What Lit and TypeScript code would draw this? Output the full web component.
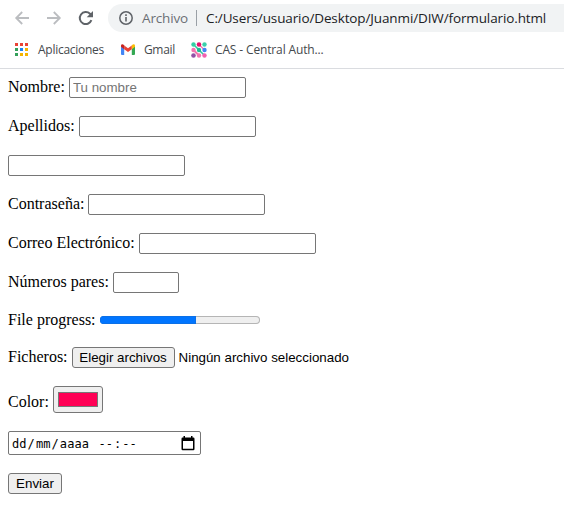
import { LitElement, html, css, svg } from "lit";
import { customElement } from "lit/decorators.js";

const APP_COLORS = ["#ea4335", "#ea4335", "#ea4335", "#34a05a", "#1a84f5", "#f5b400", "#34a05a", "#f5b400", "#f5b400"];

@customElement("browser-bar")
class BrowserBar extends LitElement {
  static styles = css`
    :host { display: block; height: 69px; border-bottom: 1px solid #dadce0; background: #fff; font-family: "Open Sans", "Noto Sans", sans-serif; white-space: nowrap; }
    svg { display: block; flex: none; }
    .nav { display: flex; align-items: center; height: 28px; padding: 4px 0 0 14px; }
    .nav > svg { width: 16px; height: 16px; margin-right: 16px; }
    .nav > svg.reload { margin-right: 14px; }
    .address { flex: 1; height: 28px; border-radius: 14px 0 0 14px; background: #f1f3f4; display: flex; align-items: center; padding-left: 11px; font-size: 13.5px; line-height: 28px; }
    .scheme { color: #6b6f74; width: 46px; margin-left: 9px; letter-spacing: -0.15px; }
    .rule { width: 1px; height: 16px; margin: 0 9px 0 8px; background: #9aa0a6; }
    .url { color: #202124; letter-spacing: -0.12px; }
    .marks { display: flex; align-items: center; height: 35px; padding-left: 15px; font-size: 12px; color: #45494d; }
    .apps { width: 66px; margin: 0 17px 0 10px; letter-spacing: -0.27px; }
    .gmail { width: 30px; margin: 0 17px 0 9px; letter-spacing: -0.35px; }
    .cas { margin-left: 8px; letter-spacing: -0.14px; }
  `;
  render() {
    return html`
      <div class="nav">
        <svg viewBox="0 0 16 16" fill="none" stroke="#bbbdc0" stroke-width="1.8"><path d="M15 8H2.5M8.2 2L2.2 8L8.2 14"/></svg>
        <svg viewBox="0 0 16 16" fill="none" stroke="#bbbdc0" stroke-width="1.8"><path d="M1 8H13.5M7.8 2L13.8 8L7.8 14"/></svg>
        <svg class="reload" viewBox="0 0 16 16"><path d="M13.4 10.2A6 6 0 1 1 12 3.8L13.5 5.4" fill="none" stroke="#5f6368" stroke-width="2"/><path d="M15 1V7.3H8.7Z" fill="#5f6368"/></svg>
        <div class="address">
          <svg width="14" height="14" viewBox="0 0 14 14"><circle cx="7" cy="7" r="6.2" fill="none" stroke="#5f6368" stroke-width="1.5"/><path d="M6.2 6H7.8V10.6H6.2ZM6.2 3.3H7.8V4.9H6.2Z" fill="#5f6368"/></svg>
          <span class="scheme">Archivo</span><span class="rule"></span>
          <span class="url">C:/Users/usuario/Desktop/Juanmi/DIW/formulario.html</span>
        </div>
      </div>
      <div class="marks">
        <svg width="13" height="13" viewBox="0 0 13 13">${APP_COLORS.map((c, i) => svg`<rect x=${(i % 3) * 5} y=${Math.floor(i / 3) * 5} width="3" height="3" fill=${c}/>`)}</svg>
        <span class="apps">Aplicaciones</span>
        <svg width="14" height="11" viewBox="0 0 14 11"><path d="M0 2V10Q0 11 1 11H3.2V4.5Z" fill="#4285f4"/><path d="M14 2V10Q14 11 13 11H10.8V4.5Z" fill="#34a853"/><path d="M3.2 1.4L7 4.2L10.8 1.4V5.2L7 8L3.2 5.2Z" fill="#ea4335"/><path d="M0 1.8C0 0 2-.2 3.2 1.4V5.2L0 2.8Z" fill="#c5221f"/><path d="M14 1.8C14 0 12-.2 10.8 1.4V5.2L14 2.8Z" fill="#fbbc04"/></svg>
        <span class="gmail">Gmail</span>
        <svg width="16" height="16" viewBox="0 0 16 16">
          <path d="M8 2.5L13.5 8" stroke="#f275b0" stroke-width="1.2"/><path d="M2.5 2.5L13.5 13.5" stroke="#2fc9a0" stroke-width="1.6"/><path d="M2.5 8L8 13.5" stroke="#f275b0" stroke-width="2"/>
          <circle cx="2.5" cy="2.5" r="2.2" fill="#35d0a5"/><circle cx="8" cy="2.5" r="2.3" fill="#e8106c"/><circle cx="13.5" cy="2.5" r="2.2" fill="#3cd0aa"/>
          <circle cx="2.5" cy="8" r="2.2" fill="#f275b0"/><circle cx="8" cy="8" r="2.2" fill="#20bd91"/><circle cx="13.5" cy="8" r="2.2" fill="#4285f4"/>
          <circle cx="2.5" cy="13.5" r="2.3" fill="#9350a5"/><circle cx="8" cy="13.5" r="2.2" fill="#f275b0"/><circle cx="13.5" cy="13.5" r="2.2" fill="#f260b0"/>
        </svg>
        <span class="cas">CAS - Central Auth...</span>
      </div>`;
  }
}

@customElement("app-root")
class AppRoot extends LitElement {
  static styles = css`
    :host { display: block; height: 509px; overflow: hidden; background: #fff; color: #000; font: 16px/20px "Liberation Serif", "Times New Roman", serif; }
    * { box-sizing: border-box; }
    .form { display: flex; flex-direction: column; gap: 18px; padding: 8px 8px 0; }
    .row { display: flex; height: 21px; gap: 4px; align-items: center; white-space: nowrap; }
    .label { padding-bottom: 1px; }
    .row.thin { height: 18px; }
    .row.thin .label { padding-bottom: 0; }
    .row.swatch { height: 27px; }
    .row.swatch .label { padding: 5px 0 0; }
    .row.date { height: 24px; }
    .field, .button, .color, .datetime { appearance: none; margin: 0; border: 1px solid #767676; border-radius: 2px; background: #fff; }
    .field { width: 177px; height: 21px; padding: 1px 3px; font: 13.333px "Liberation Sans", Arial, sans-serif; outline: none; }
    .field::placeholder { color: #757575; }
    .field.short { width: 66px; }
    .button { height: 21px; padding: 0; border-radius: 3px; background: #efefef; color: #000; font: 13.333px/19px "Liberation Sans", Arial, sans-serif; text-align: center; }
    .choose { width: 103px; }
    .send { width: 54px; }
    .status { font: 13.333px/21px "Liberation Sans", Arial, sans-serif; }
    .track { width: 160px; height: 8px; border-radius: 4px; background: #efefef; overflow: hidden; display: flex; box-shadow: inset 0 0 0 1px #b5b5b5; }
    .bar { width: 60%; background: #0075ff; box-shadow: inset 0 0 0 1px #0c70e6; }
    .color { width: 50px; height: 27px; border-radius: 3px; background: #efefef; padding: 5px 4px; }
    .chip { height: 15px; border: 1px solid #777; background: #ff0055; }
    .datetime { width: 193px; height: 24px; display: flex; align-items: center; justify-content: space-between; padding: 0 5px 0 2px; font: 12px/22px "DejaVu Sans Mono", monospace; white-space: pre; }
    .parts { padding-top: 1px; letter-spacing: 0.08px; }
    .part { padding: 0 1px; }
  `;
  render() {
    const text = (label: string, placeholder = "", kind = "") => html`
      <div class="row">${label ? html`<span class="label">${label}</span>` : ""}<input class="field ${kind}" placeholder=${placeholder} aria-label=${label}></div>`;
    const part = (value: string) => html`<span class="part">${value}</span>`;
    return html`
      <browser-bar></browser-bar>
      <div class="form">
        ${text("Nombre:", "Tu nombre")}
        ${text("Apellidos:")}
        ${text("")}
        ${text("Contraseña:")}
        ${text("Correo Electrónico:")}
        ${text("Números pares:", "", "short")}
        <div class="row thin"><span class="label">File progress:</span><div class="track"><div class="bar"></div></div></div>
        <div class="row"><span class="label">Ficheros:</span><button class="button choose">Elegir archivos</button><span class="status">Ningún archivo seleccionado</span></div>
        <div class="row swatch"><span class="label">Color:</span><div class="color"><div class="chip"></div></div></div>
        <div class="row date"><div class="datetime"><span class="parts">${part("dd")}/${part("mm")}/${part("aaaa")} ${part("--")}:${part("--")}</span>
          <svg width="14" height="15" viewBox="0 0 14 15"><path d="M2.5 0H4V1.5H10V0H11.5V1.5H12.3Q13.5 1.5 13.5 2.7V13Q13.5 14.2 12.3 14.2H1.7Q.5 14.2 .5 13V2.7Q.5 1.5 1.7 1.5H2.5ZM2 5V12.8H12V5Z" fill="#000" fill-rule="evenodd"/></svg></div></div>
        <div class="row"><button class="button send">Enviar</button></div>
      </div>`;
  }
}
